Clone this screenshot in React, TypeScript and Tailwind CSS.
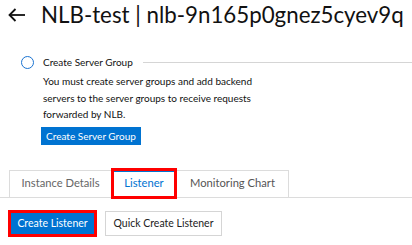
import React from 'react'

const font = { fontFamily: 'Lato, "Open Sans", sans-serif' }

function BackArrow() {
  return (
    <svg width="18" height="14" viewBox="0 0 18 14" fill="none" stroke="#111" strokeWidth="1.8">
      <path d="M17 7H1.5" />
      <path d="M7.5 1 1.5 7l6 6" />
    </svg>
  )
}

function Tabs() {
  return (
    <div className="flex border-b border-[#dcdcdc] pl-[9px]">
      <div className="flex h-[28px] border border-b-0 border-[#dcdcdc] -mb-px">
        <div className="flex items-center justify-center w-[101px] text-[11.2px] text-[#666] bg-white border-b border-[#dcdcdc] whitespace-nowrap">
          Instance Details
        </div>
        <div className="flex items-center justify-center w-[66px] -my-[3px] h-[31px] border-[3px] border-[#ff0000] text-[11.2px] text-[#0073d1] bg-white shadow-[inset_0_1px_0_#0073d1] whitespace-nowrap">
          Listener
        </div>
        <div className="flex items-center justify-center w-[111px] text-[11.2px] text-[#555] bg-white border-b border-[#dcdcdc] whitespace-nowrap">
          Monitoring Chart
        </div>
      </div>
    </div>
  )
}

export default function App() {
  return (
    <div className="w-[412px] h-[245px] bg-white overflow-hidden" style={font}>
      <div className="flex items-center h-[30px] pl-[8px] gap-[15px]">
        <BackArrow />
        <h1 className="text-[22.3px] text-[#111] leading-none whitespace-nowrap">NLB-test | nlb-9n165p0gnez5cyev9q</h1>
      </div>

      <div className="pl-[21px] pt-[25px]">
        <div className="flex items-center h-[14px]">
          <div className="w-[13px] h-[13px] rounded-full border-[1.5px] border-[#1a73d1]" />
          <span className="ml-[9px] text-[10px] text-[#111] whitespace-nowrap">Create Server Group</span>
          <div className="flex-1 h-px bg-[#d5d5d5] ml-[10px]" />
        </div>
        <p className="ml-[22px] mt-[4px] w-[212px] text-[10px] leading-[16.5px] text-[#111]">
          You must create server groups and add backend servers to the server groups to receive requests forwarded by NLB.
        </p>
        <button className="flex items-center justify-center ml-[20px] mt-[4px] h-[18px] w-[100px] bg-[#0073d1] text-white text-[10px] leading-none whitespace-nowrap">
          Create Server Group
        </button>
      </div>

      <div className="mt-[25px]">
        <Tabs />
      </div>

      <div className="flex items-center gap-[8px] pl-[8px] mt-[12px]">
        <div className="border-[3px] border-[#ff0000]">
          <div className="flex items-center justify-center h-[21px] w-[83px] bg-[#0073d1] text-white text-[10.5px] leading-none whitespace-nowrap">
            Create Listener
          </div>
        </div>
        <div className="flex items-center justify-center h-[25px] w-[117px] border border-[#d5d5d5] bg-white text-[#222] text-[10.5px] leading-none whitespace-nowrap">
          Quick Create Listener
        </div>
      </div>
    </div>
  )
}
